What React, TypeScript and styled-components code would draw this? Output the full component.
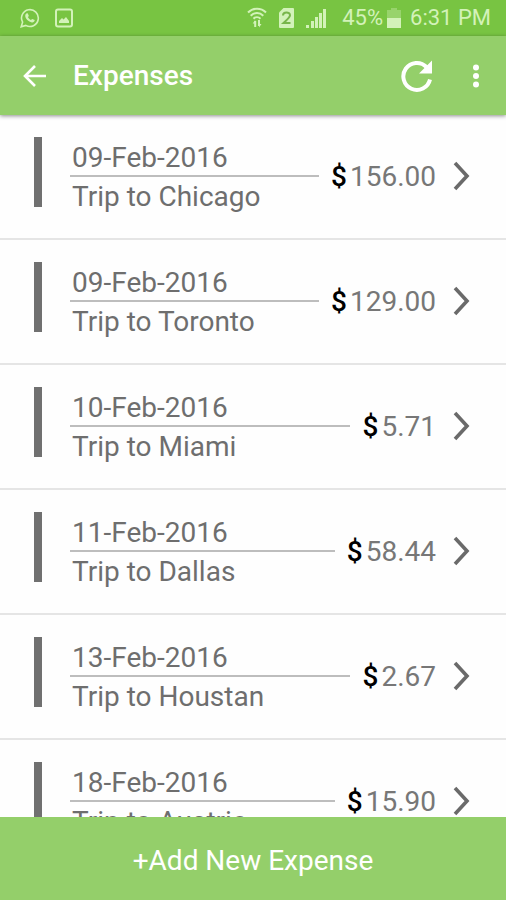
import React from "react";
import styled, { createGlobalStyle } from "styled-components";

const GlobalStyle = createGlobalStyle`
  * { box-sizing: border-box; }
  body { margin: 0; background: #fefefe; font-family: Roboto, "Liberation Sans", sans-serif; }
  button { font: inherit; color: inherit; border: 0; padding: 0; background: none; cursor: pointer; }
`;

const Screen = styled.div`
  display: flex;
  flex-direction: column;
  height: 100vh;
  overflow: hidden;
`;

const StatusBar = styled.div`
  flex: none;
  display: flex;
  align-items: center;
  justify-content: space-between;
  height: 36px;
  padding: 0 15px 0 20px;
  background: #78c442;
  color: #d3f2b9;
  font-size: 22px;
  line-height: 36px;
`;

const StatusGroup = styled.div<{ $gap: number }>`
  display: flex;
  align-items: center;
  gap: ${(p) => p.$gap}px;
  svg { display: block; }
`;

const AppBar = styled.header`
  flex: none;
  display: flex;
  align-items: center;
  height: 79px;
  padding: 0 20px;
  background: #94cf6a;
  color: #fff;
  box-shadow: 0 1px 4px rgba(0, 0, 0, 0.45);
  z-index: 1;
`;

const IconButton = styled.button`
  display: flex;
  align-items: center;
  justify-content: center;
  height: 48px;
  svg { display: block; }
`;

const Title = styled.h1`
  flex: 1;
  margin: 0 0 0 25px;
  font-size: 28px;
  line-height: 32px;
  font-weight: 500;
`;

const Actions = styled.div`
  display: flex;
  gap: 32px;
`;

const List = styled.ul`
  flex: 1;
  min-height: 0;
  margin: 0;
  padding: 0;
  overflow: hidden auto;
  scrollbar-width: none;
  list-style: none;
`;

const Item = styled.li`
  border-bottom: 2px solid #e5e5e5;
`;

const RowButton = styled.button`
  display: flex;
  align-items: flex-start;
  width: 100%;
  height: 123px;
  padding: 22px 35px 0 34px;
  text-align: left;
  color: #6e6e6e;
  font-size: 28px;
`;

const Marker = styled.span`
  flex: none;
  width: 8px;
  height: 70px;
  margin-right: 28px;
  background: #707070;
`;

const Details = styled.span`
  flex: 1;
  min-width: 0;
  display: flex;
  flex-direction: column;
`;

const DateText = styled.span`
  padding: 4px 0 0 2px;
  border-bottom: 2px solid #bdbdbd;
  line-height: 34px;
`;

const Description = styled.span`
  padding-left: 2px;
  line-height: 40px;
  white-space: nowrap;
`;

const Amount = styled.span`
  display: flex;
  gap: 3px;
  margin: 0 17px 0 12px;
  line-height: 80px;
  color: #777;
`;

const Currency = styled.span`
  color: #000;
  font-weight: 500;
`;

const Chevron = styled.svg`
  flex: none;
  display: block;
  margin-top: 24px;
`;

const AddButton = styled.button`
  && {
    flex: none;
    height: 83px;
    padding-top: 4px;
    background: #94cf6a;
    color: #fff;
    font-size: 28px;
    line-height: 36px;
  }
`;

const expenses = [
  { date: "09-Feb-2016", trip: "Trip to Chicago", amount: "156.00" },
  { date: "09-Feb-2016", trip: "Trip to Toronto", amount: "129.00" },
  { date: "10-Feb-2016", trip: "Trip to Miami", amount: "5.71" },
  { date: "11-Feb-2016", trip: "Trip to Dallas", amount: "58.44" },
  { date: "13-Feb-2016", trip: "Trip to Houstan", amount: "2.67" },
  { date: "18-Feb-2016", trip: "Trip to Austria", amount: "15.90" },
];

const WhatsAppIcon = () => (
  <svg width="20" height="20" viewBox="0 0 20 20" fill="none" stroke="currentColor">
    <path d="M1.2 18.8l1.4-4.6a8.4 8.4 0 1 1 3.2 3.2z" strokeWidth="1.6" />
    <path d="M6.2 5.6l1.5-.4 1.2 2.7-1 1.2c.7 1.5 1.7 2.4 3 3l1.3-1.2 2.5 1.2c0 1.6-1.5 2.5-2.8 2.3-3.4-.5-6.6-3.8-6.7-6.6 0-.9.4-1.7 1-2.2z" fill="currentColor" stroke="none" />
  </svg>
);

const PictureIcon = () => (
  <svg width="18" height="20" viewBox="0 0 18 20" fill="none">
    <rect x="1" y="1.5" width="16" height="17" rx="2" stroke="currentColor" strokeWidth="2" />
    <path d="M4 15v-2l3-3 1.5 1.4L11 9l3 4v2z" fill="currentColor" />
  </svg>
);

const WifiIcon = () => (
  <svg width="20" height="22" viewBox="0 0 20 22" fill="none" stroke="currentColor">
    <path d="M1 5.5c5-5 13-5 18 0M3.7 8.7c3.6-3.6 9-3.6 12.6 0M6.5 11.7c2-2 5-2 7 0" strokeWidth="2" />
    <path d="M8.2 20v-6M12 13v6" strokeWidth="2" />
    <path d="M5.7 16.5L8.2 13v3.5zM14.5 17L12 20.5V17z" fill="currentColor" stroke="none" />
  </svg>
);

const SimIcon = () => (
  <svg width="15" height="20" viewBox="0 0 15 20" fill="none">
    <path d="M4.5 0H14a1 1 0 0 1 1 1v18a1 1 0 0 1-1 1H1a1 1 0 0 1-1-1V4.5z" fill="currentColor" />
    <path d="M4 7.5C4 3.5 11 3.5 11 7.3c0 2.2-2.5 4-6.500 7.700h7" stroke="#78b64a" strokeWidth="2" />
  </svg>
);

const SignalIcon = () => (
  <svg width="20" height="20" viewBox="0 0 20 20" fill="currentColor">
    <path d="M0 17h3v3H0zM5 13h3v7H5zM9 9h3v11H9zM13 5h3v15h-3zM17 1h3v19h-3z" />
  </svg>
);

const BatteryIcon = () => (
  <svg width="14" height="20" viewBox="0 0 14 20" fill="currentColor">
    <path d="M4 0h6v2h4v8H0V2h4z" opacity=".35" />
    <path d="M0 10h14v10H0z" />
  </svg>
);

export default function App() {
  return (
    <>
      <GlobalStyle />
      <Screen>
        <StatusBar>
          <StatusGroup $gap={15}>
            <WhatsAppIcon />
            <PictureIcon />
          </StatusGroup>
          <StatusGroup $gap={16}>
            <StatusGroup $gap={12}>
              <WifiIcon />
              <SimIcon />
              <SignalIcon />
            </StatusGroup>
            <StatusGroup $gap={9}>
              <StatusGroup $gap={4}>
                <span>45%</span>
                <BatteryIcon />
              </StatusGroup>
              <span>6:31 PM</span>
            </StatusGroup>
          </StatusGroup>
        </StatusBar>
        <AppBar>
          <IconButton aria-label="Back">
            <svg width="28" height="24" viewBox="0 0 28 24" fill="none" stroke="currentColor" strokeWidth="2.6">
              <path d="M15 2L5 12l10 10M5 12h21" />
            </svg>
          </IconButton>
          <Title>Expenses</Title>
          <Actions>
            <IconButton aria-label="Refresh">
              <svg width="34" height="34" viewBox="0 0 34 34" fill="none">
                <path d="M30 20.5A13.5 13.5 0 1 1 26.5 8" stroke="currentColor" strokeWidth="4" />
                <path d="M32 1.500V14.500H19z" fill="currentColor" />
              </svg>
            </IconButton>
            <IconButton aria-label="More options">
              <svg width="20" height="26" viewBox="0 0 20 26" fill="currentColor">
                <circle cx="10" cy="4.5" r="3" />
                <circle cx="10" cy="13" r="3" />
                <circle cx="10" cy="21.5" r="3" />
              </svg>
            </IconButton>
          </Actions>
        </AppBar>
        <List>
          {expenses.map((e) => (
            <Item key={e.trip}>
              <RowButton>
                <Marker />
                <Details>
                  <DateText>{e.date}</DateText>
                  <Description>{e.trip}</Description>
                </Details>
                <Amount>
                  <Currency>$</Currency>
                  {e.amount}
                </Amount>
                <Chevron width="18" height="30" viewBox="0 0 18 30" fill="none" stroke="#6a6a6a" strokeWidth="3.6">
                  <path d="M2 2l12 13L2 28" />
                </Chevron>
              </RowButton>
            </Item>
          ))}
        </List>
        <AddButton>+Add New Expense</AddButton>
      </Screen>
    </>
  );
}
